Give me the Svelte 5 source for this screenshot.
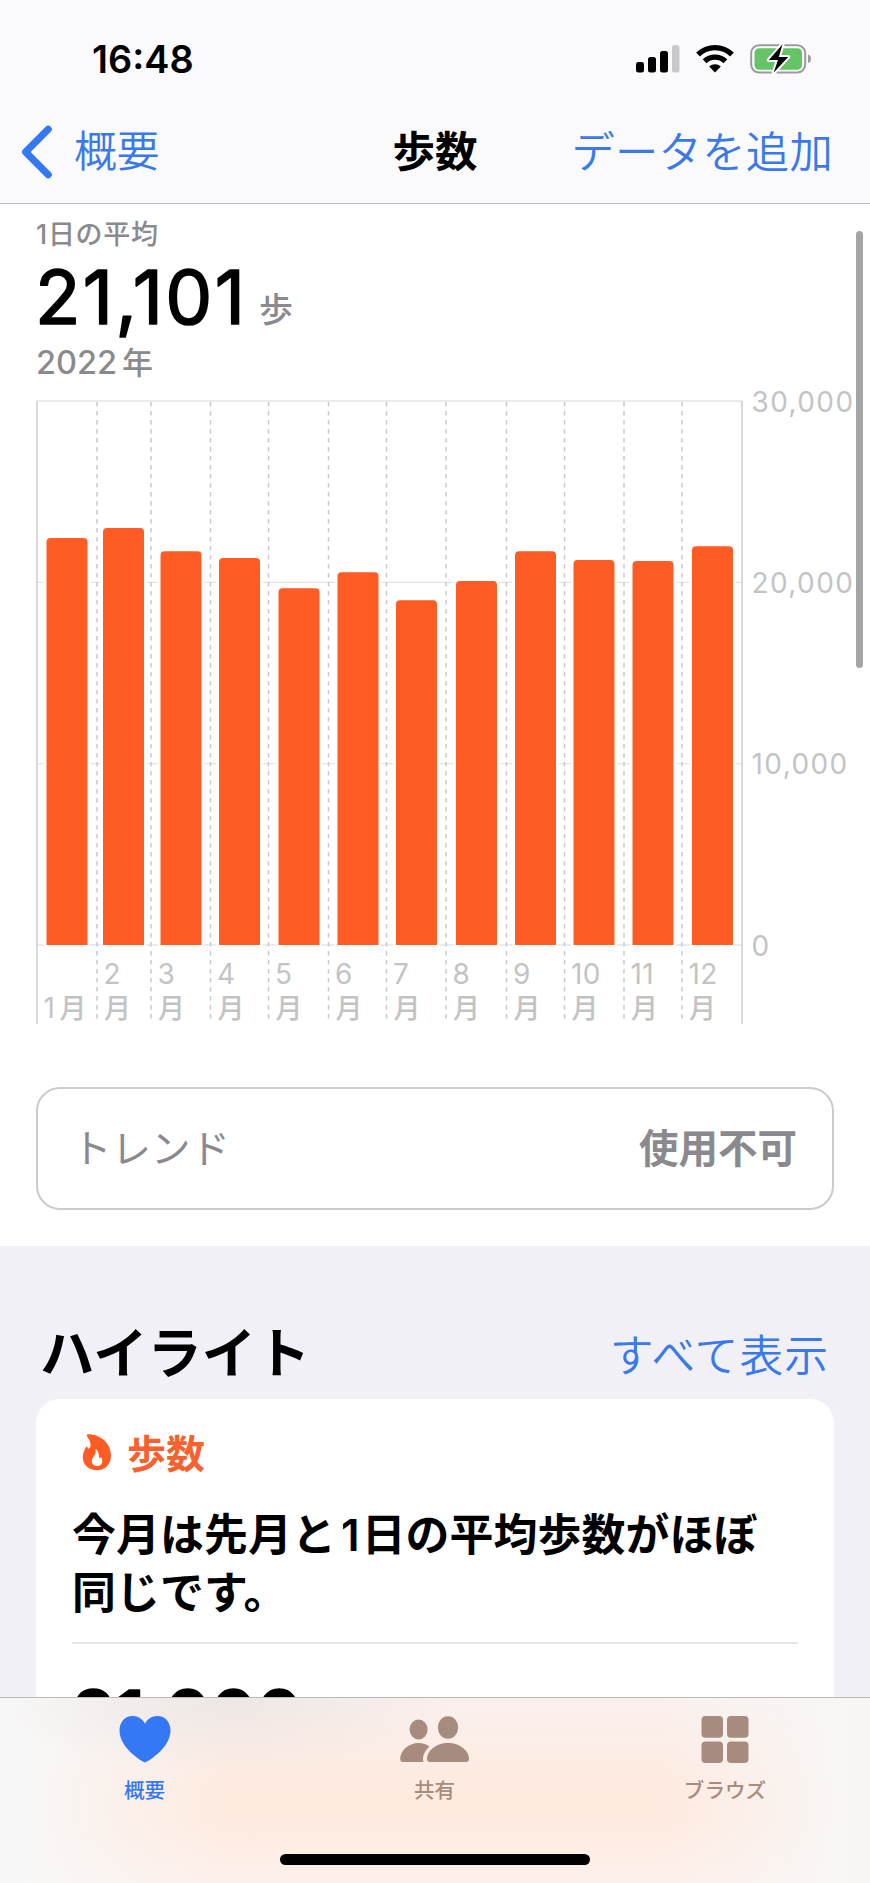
<script lang="ts">
	type Month = { label: string; value: number; line: number; bar: number };

	// line and bar are the left edges inside the plot, months differ in length
	const months: Month[] = [
		{ label: '1', value: 22450, line: 37, bar: 46.5 },
		{ label: '2', value: 23000, line: 97, bar: 103 },
		{ label: '3', value: 21720, line: 151, bar: 160.5 },
		{ label: '4', value: 21340, line: 210.5, bar: 219 },
		{ label: '5', value: 19670, line: 268.5, bar: 278.5 },
		{ label: '6', value: 20560, line: 328.5, bar: 337.5 },
		{ label: '7', value: 19010, line: 386.5, bar: 396 },
		{ label: '8', value: 20070, line: 446, bar: 456 },
		{ label: '9', value: 21720, line: 506.5, bar: 515 },
		{ label: '10', value: 21230, line: 564.5, bar: 573.5 },
		{ label: '11', value: 21170, line: 624, bar: 632.5 },
		{ label: '12', value: 21990, line: 682, bar: 692 }
	];
	const ticks = [30000, 20000, 10000, 0];

	const top = 14;
	const bottom = 558;
	const y = (value: number) => bottom - ((bottom - top) * value) / 30000;
	const barPath = (x: number, value: number) =>
		`M${x} ${bottom}V${y(value) + 4}q0-4 4-4h33q4 0 4 4V${bottom}z`;

	let tab = $state('summary');
</script>

<div class="screen">
	<header>
		<div class="status">
			<span class="time">16:48</span>
			<svg width="180" height="34" viewBox="0 0 180 34">
				<rect x="1" y="21" width="8" height="10.5" rx="2.5" />
				<rect x="13" y="16" width="8" height="15.5" rx="2.5" />
				<rect x="25" y="10" width="8" height="21.5" rx="2.5" />
				<rect x="37" y="4" width="7.5" height="27.5" rx="2.5" fill="#c9c9cb" />
				<g fill="none" stroke="#000" stroke-width="5.4">
					<path d="M63 13.5a24.5 24.5 0 0 1 34 0" />
					<path d="M69.6 20.3a15 15 0 0 1 20.8 0" />
				</g>
				<path d="M80 31.4l-5.8-5.8a8.4 8.4 0 0 1 11.6 0z" />
				<rect x="116.2" y="4.2" width="54" height="27.4" rx="8" fill="#fff" stroke="#9b9b9d" stroke-width="2" />
				<rect x="119.5" y="7.3" width="47.5" height="21.4" rx="4.5" fill="#65c466" />
				<path d="M173 13.5q3 1 3 4.3t-3 4.3z" fill="#9b9b9d" />
				<path
					d="M147.6 3.3L133.8 19h9.2l-4.4 12.8L153.2 16h-9.4z"
					stroke="#fff"
					stroke-width="4"
					stroke-linejoin="round"
					paint-order="stroke"
				/>
			</svg>
		</div>
		<nav>
			<button class="back">
				<svg width="32" height="54" viewBox="0 0 32 54">
					<path d="M27.2 4.3L4.6 27l22.6 22.7" fill="none" stroke="#3478f6" stroke-width="7.2" stroke-linecap="round" stroke-linejoin="round" />
				</svg>
				概要
			</button>
			<h1>歩数</h1>
			<button class="add">データを追加</button>
		</nav>
	</header>

	<main>
		<div class="thumb"></div>

		<section class="summary">
			<p class="caption">1日の平均</p>
			<p class="total">
				<svg width="215" height="92" viewBox="0 0 215 92">
					<text x="0" y="75.5" textLength="210">21,101</text>
				</svg>
				<span>歩</span>
			</p>
			<p class="period">2022<span>年</span></p>

			<svg class="chart" width="870" height="642" viewBox="0 0 870 642">
				{#each ticks as tick}
					<line x1="36" x2="742" y1={y(tick)} y2={y(tick)} stroke="#e4e4e7" stroke-width="1.4" />
					<text class="axis tick" x="751.5" y={y(tick) + 10.5}>{tick.toLocaleString('en-US')}</text>
				{/each}
				<path d="M37 14V637M742 14V637" stroke="#d4d4d9" stroke-width="1.7" />
				{#each months as month, i}
					{#if i > 0}
						<line x1={month.line} x2={month.line} y1="15" y2="634" stroke="#c9c9ce" stroke-width="1.5" stroke-dasharray="4.5 4.5" />
					{/if}
					<path class="bar" d={barPath(month.bar, month.value)} />
					{#if i === 0}
						<text class="axis" x="43.5" y="631">1</text>
						<text class="axis month" x="59.5" y="631">月</text>
					{:else}
						<text class="axis" x={month.line + 6.5} y="597">{month.label}</text>
						<text class="axis month" x={month.line + 7} y="631">月</text>
					{/if}
				{/each}
			</svg>

			<div class="trend">
				<span>トレンド</span>
				<b>使用不可</b>
			</div>
		</section>

		<section class="highlights">
			<div class="heading">
				<h2>ハイライト</h2>
				<button>すべて表示</button>
			</div>
			<article>
				<h3>
					<svg width="30" height="38" viewBox="0 0 30 38">
						<path
							fill="#ff5b25"
							fill-rule="evenodd"
							d="M5.6 1.3C17 .8 29 9.500 29 22.500C29 31.500 23 37.200 15 37.200C6.500 37.200.8 31.500.8 24.500C.8 20.500 2.200 17.200 4 14.200C4.600 13.200 5.400 13.500 5.600 14.500C5.800 15.500 6.200 16 7 15.600C9.800 14 8.800 8.500 5.200 3.500C4.400 2.300 4.600 1.400 5.600 1.300ZM13.600 16.800C14.200 20.500 12.800 22 11.400 24C10.200 25.700 9.600 27 9.800 28.700C10.200 31.500 12.500 33 15 33C18.300 33 20.300 30.800 20.300 27.900C20.300 26.700 20 25.500 19.400 24.700C18.900 24.100 18.500 24.400 18.200 24.900C17.800 25.500 17.200 25.400 17.100 24.600C17 21.800 16.500 18.500 14.400 16.500C13.900 16.100 13.500 16.200 13.600 16.800Z"
						/>
					</svg>
					歩数
				</h3>
				<p class="text">今月は先月と<span>1</span>日の平均歩数がほぼ同じです。</p>
				<hr />
				<svg width="240" height="80" viewBox="0 0 240 80">
					<text class="count" x="0" y="57" textLength="230">21,000</text>
				</svg>
			</article>
		</section>
	</main>

	<footer>
		<div class="tabs">
			<button class:active={tab === 'summary'} onclick={() => (tab = 'summary')}>
				<svg width="70" height="50" viewBox="0 0 70 50">
					<path d="M35 48.500C33.500 48.500 9.500 34.500 9.500 16.500C9.500 8 15 2 22.500 2C28.500 2 33 5.500 35 9.800C37 5.500 41.500 2 47.500 2C55 2 60.500 8 60.500 16.500C60.500 34.500 36.500 48.500 35 48.500Z" />
				</svg>
				概要
			</button>
			<button class:active={tab === 'sharing'} onclick={() => (tab = 'sharing')}>
				<svg width="70" height="50" viewBox="0 0 70 50">
					<ellipse cx="18.600" cy="15.500" rx="9" ry="10" />
					<ellipse cx="48" cy="13.500" rx="10.200" ry="11.300" />
					<path d="M3 48Q.200 48 .200 45C.200 37 8 29 18.600 29Q25 29 29.500 32.500Q23 38 23 45Q23 47 23.500 48Z" />
					<path d="M30 48Q27 48 27 44.800C27 37 36 29 48 29S69 37 69 44.800Q69 48 66 48Z" />
				</svg>
				共有
			</button>
			<button class:active={tab === 'browse'} onclick={() => (tab = 'browse')}>
				<svg width="70" height="50" viewBox="0 0 70 50">
					<rect x="11.500" y="2" width="21.500" height="21.700" rx="4" />
					<rect x="37" y="2" width="21.500" height="21.700" rx="4" />
					<rect x="11.500" y="27.500" width="21.500" height="21.500" rx="4" />
					<rect x="37" y="27.500" width="21.500" height="21.500" rx="4" />
				</svg>
				ブラウズ
			</button>
		</div>
		<div class="home"></div>
	</footer>
</div>

<style>
	:global(body) {
		background: #fff;
	}
	.screen {
		display: flex;
		flex-direction: column;
		width: 870px;
		height: 1883px;
		overflow: hidden;
		font-family: Inter, 'Noto Sans CJK JP', sans-serif;
		color: #000;
	}
	h1,
	h2,
	h3,
	p {
		margin: 0;
	}
	button {
		border: 0;
		padding: 0;
		background: none;
		font: inherit;
		color: #3a79ea;
		white-space: nowrap;
		cursor: pointer;
	}
	svg {
		display: block;
		flex: none;
	}

	header {
		flex: none;
		box-sizing: border-box;
		height: 204px;
		border-bottom: 1px solid #bcbcbe;
		background: #fafafc;
	}
	.status {
		display: flex;
		justify-content: space-between;
		align-items: center;
		height: 116px;
		padding: 0 55px 0 92px;
	}
	.time {
		padding-top: 1px;
		font-size: 37.8px;
		font-weight: 600;
	}
	nav {
		display: grid;
		grid-template-columns: 1fr auto 1fr;
		align-items: center;
		height: 70px;
		padding: 0 37px 0 21px;
		font-size: 43.3px;
		line-height: 70px;
		font-weight: 350;
	}
	.back {
		display: flex;
		align-items: center;
		gap: 21px;
		font-size: 42.8px;
	}
	h1 {
		padding: 1px 0 0 16px;
		font-size: 42.5px;
		font-weight: 700;
	}
	.back,
	.add {
		padding-top: 1px;
	}
	.back svg {
		margin-top: -1px;
	}
	.add {
		justify-self: end;
		letter-spacing: 0.3px;
	}

	main {
		position: relative;
		flex: 1;
		min-height: 0;
		overflow: hidden;
		background: #f1f0f6;
	}
	.thumb {
		position: absolute;
		top: 27px;
		right: 7px;
		width: 7px;
		height: 437px;
		border-radius: 4px;
		background: #a5a5a5;
	}
	.summary {
		height: 1041.5px;
		background: #fff;
	}
	.summary p {
		padding-left: 36px;
		color: #8a8a8e;
		font-weight: 500;
	}
	.summary .caption {
		padding-top: 12px;
		font-size: 27px;
		line-height: 37px;
		letter-spacing: 0.7px;
	}
	.summary .total {
		display: flex;
		align-items: center;
		height: 82px;
		padding-left: 35px;
	}
	.total text,
	.count {
		font-size: 74.5px;
		font-weight: 400;
		fill: #000;
		stroke: #000;
		stroke-width: 1.6px;
		stroke-linejoin: round;
	}
	.total span {
		padding-top: 32px;
		margin-left: 9px;
		font-size: 34px;
		line-height: 40px;
	}
	.summary .period {
		font-size: 32.5px;
		line-height: 56px;
		height: 52px;
	}
	.period span {
		margin-left: 5px;
		font-size: 31px;
	}
	.axis {
		font-size: 28px;
		fill: #c3c3c5;
		letter-spacing: 0.3px;
	}
	.tick {
		letter-spacing: 1.4px;
	}
	.month {
		font-size: 27px;
		font-weight: 500;
	}
	.bar {
		fill: #ff5b25;
		stroke: #fff;
		stroke-width: 5px;
		paint-order: stroke;
	}
	.trend {
		box-sizing: border-box;
		display: flex;
		justify-content: space-between;
		align-items: center;
		height: 123px;
		margin: 58px 36px 0;
		padding: 0 35px 0 34px;
		border: 2px solid #cbcbd0;
		border-radius: 24px;
		font-size: 39.5px;
		line-height: 60px;
		color: #8a8a8e;
	}
	.trend b {
		padding-top: 1px;
		font-weight: 700;
	}

	.heading {
		display: flex;
		justify-content: space-between;
		align-items: center;
		height: 153px;
		padding: 0 41px 0 40px;
	}
	h2 {
		padding-top: 62px;
		font-size: 54.3px;
		line-height: 64px;
		font-weight: 700;
	}
	.heading button {
		padding-top: 69px;
		font-size: 43.8px;
		line-height: 64px;
		font-weight: 350;
		letter-spacing: 1px;
	}
	article {
		height: 500px;
		margin: 0 36px;
		padding: 22px 36px 0;
		box-sizing: border-box;
		border-radius: 24px;
		background: #fff;
	}
	h3 {
		display: flex;
		align-items: center;
		gap: 15px;
		height: 66px;
		padding-left: 10px;
		font-size: 39px;
		font-weight: 700;
		line-height: 64px;
		color: #f7602f;
	}
	h3 svg {
		margin-top: -3px;
	}
	.text {
		margin-top: 19px;
		padding-right: 30px;
		font-size: 43.9px;
		line-height: 58.5px;
		font-weight: 700;
		letter-spacing: 0.1px;
	}
	.text span {
		margin: 0 2px 0 5px;
		font-weight: 600;
	}
	hr {
		height: 2px;
		margin: 19px 0 39px;
		border: 0;
		background: #e6e6e8;
	}
	.count {
		font-size: 69px;
		font-weight: 600;
	}

	footer {
		flex: none;
		box-sizing: border-box;
		height: 186px;
		border-top: 1.5px solid #bdb9b9;
		background:
			radial-gradient(ellipse 230px 75px at 220px 0, rgb(229 225 223 / 0.6), transparent),
			linear-gradient(90deg, #f8f7f7 2%, transparent 26%, transparent 76%, #f8f6f5 97%),
			linear-gradient(#f9f0ee, #feeadf 50%, #feeadf 65%, #fdf0eb);
	}
	.tabs {
		display: grid;
		grid-template-columns: 289px 1fr 290px;
		height: 156px;
	}
	.tabs button {
		display: flex;
		flex-direction: column;
		align-items: center;
		padding-top: 16px;
		gap: 12px;
		font-size: 20.6px;
		line-height: 30px;
		font-weight: 500;
		color: #a78b7e;
	}
	.tabs button.active {
		color: #3478f6;
	}
	.tabs svg {
		fill: currentColor;
	}
	.home {
		width: 310px;
		height: 11px;
		margin: 0 auto;
		border-radius: 6px;
		background: #000;
	}
</style>
